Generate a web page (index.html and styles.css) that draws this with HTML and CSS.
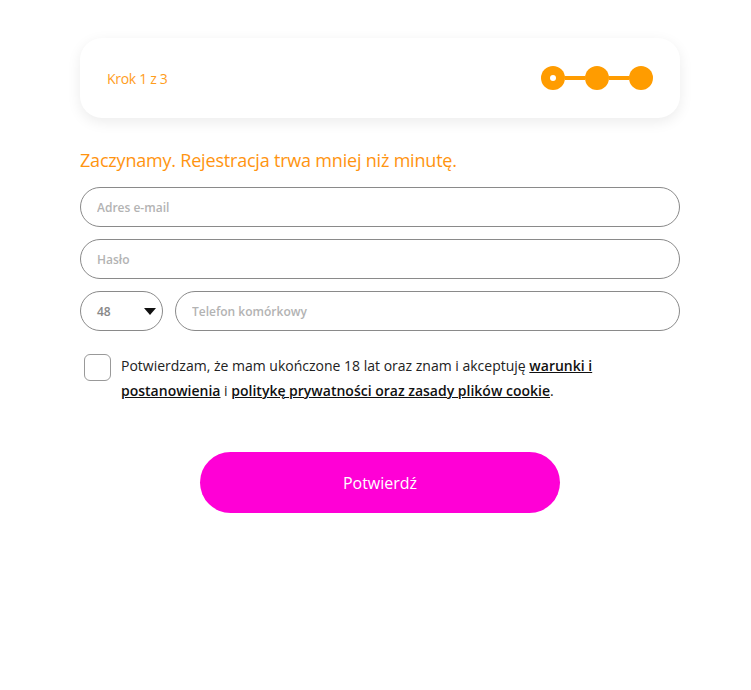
FILE: index.html
```html
<!DOCTYPE html>
<html lang="pl">

<head>
    <meta charset="UTF-8">
    <meta name="viewport" content="width=device-width, initial-scale=1">
    <title>Rejestracja</title>
    <link rel="stylesheet" href="styles.css">
</head>
<body>
    <div class="wrap">
        <div class="steps">
            <span class="steps-label">Krok 1 z 3</span>
            <div class="dots">
                <span class="dot dot-current"></span>
                <span class="bar"></span>
                <span class="dot"></span>
                <span class="bar"></span>
                <span class="dot"></span>
            </div>
        </div>

        <h1 class="title">Zaczynamy. Rejestracja trwa mniej niż minutę.</h1>

        <form id="regForm" class="form" novalidate>
            <input class="field" type="email" name="email" placeholder="Adres e-mail">
            <input class="field" type="password" name="password" placeholder="Hasło">
            <div class="phone-row">
                <div class="prefix">
                    <span>48</span>
                    <span class="caret"></span>
                </div>
                <input class="field" type="tel" name="phone" placeholder="Telefon komórkowy">
            </div>

            <label class="consent">
                <span class="box"></span>
                <span class="consent-text">Potwierdzam, że mam ukończone 18 lat oraz znam i akceptuję <a href="#">warunki i postanowienia</a> i <a href="#">politykę prywatności oraz zasady plików cookie</a>.</span>
            </label>

            <button type="submit">Potwierdź</button>
        </form>
    </div>
</body>
</html>
```

FILE: styles.css
```css
body {
    font-family: "Open Sans", Arial, sans-serif;
    margin: 0;
    background: #ffffff;
    color: #222;
}

.wrap {
    width: 600px;
    margin: 38px auto 0 80px;
}

.steps {
    height: 80px;
    background: white;
    border-radius: 22px;
    box-shadow: 0 4px 14px rgba(0, 0, 0, 0.08);
    display: flex;
    align-items: center;
    justify-content: space-between;
    padding: 0 27px;
}

.steps-label {
    color: #ff9d1c;
    font-size: 14px;
    letter-spacing: -0.3px;
}

.dots {
    display: flex;
    align-items: center;
}

.dot {
    width: 24px;
    height: 24px;
    border-radius: 50%;
    background: #ff9c00;
}

.dot-current {
    position: relative;
}

.dot-current::after {
    content: "";
    position: absolute;
    left: 9px;
    top: 9px;
    width: 6px;
    height: 6px;
    border-radius: 50%;
    background: white;
}

.bar {
    width: 20px;
    height: 4px;
    background: #ff9c00;
}

.title {
    font-size: 18px;
    font-weight: normal;
    color: #ff9410;
    margin: 30px 0 15px;
    letter-spacing: -0.2px;
}

.form {
    display: flex;
    flex-direction: column;
    gap: 12px;
}

.field {
    height: 40px;
    box-sizing: border-box;
    width: 100%;
    border: 1px solid #8a8a8a;
    border-radius: 20px;
    padding: 0 16px;
    font-family: inherit;
    font-size: 12px;
    font-weight: 600;
}

.field::placeholder {
    color: #b3b3b3;
}

.phone-row {
    display: flex;
    gap: 12px;
}

.prefix {
    flex: 0 0 83px;
    height: 40px;
    box-sizing: border-box;
    border: 1px solid #8a8a8a;
    border-radius: 20px;
    padding: 0 6px 0 16px;
    display: flex;
    align-items: center;
    justify-content: space-between;
    font-size: 12px;
    font-weight: 600;
    color: #888;
}

.caret {
    width: 0;
    height: 0;
    border-left: 6px solid transparent;
    border-right: 6px solid transparent;
    border-top: 7px solid #111;
}

.consent {
    display: flex;
    gap: 10px;
    margin: 10px 0 0 4px;
    font-size: 14px;
    line-height: 25px;
}

.consent-text {
    max-width: 482px;
}

.box {
    flex: 0 0 27px;
    height: 27px;
    box-sizing: border-box;
    border: 1px solid #999;
    border-radius: 6px;
    margin-top: 1px;
}

.consent-text a {
    color: #111;
    font-weight: 600;
    text-decoration: underline;
}

button {
    align-self: center;
    width: 360px;
    height: 61px;
    margin-top: 37px;
    border: none;
    border-radius: 31px;
    background: #ff00d6;
    color: white;
    font-family: inherit;
    font-size: 16px;
    cursor: pointer;
}
```
